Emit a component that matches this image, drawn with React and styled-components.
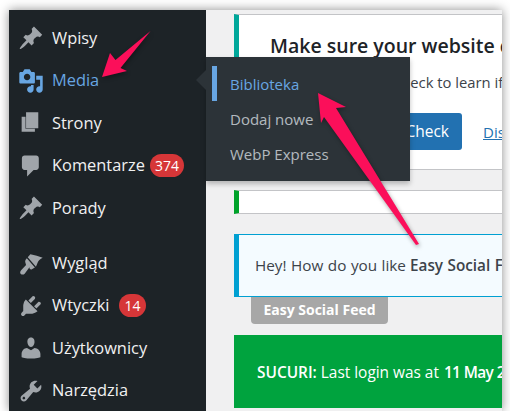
import styled, { createGlobalStyle } from "styled-components"

const GlobalStyle = createGlobalStyle`
    html, body {
        margin: 0;
        padding: 0;
        background: #fff;
        font-family: "Open Sans", "Liberation Sans", sans-serif;
    }
`

const Frame = styled.div`
    position: relative;
    display: flex;
    width: 493px;
    height: 401px;
    margin: 10px 0 0 9px;
    box-shadow: 0 0 10px rgba(0, 0, 0, 0.45);
`

const Sidebar = styled.nav`
    display: flex;
    flex-direction: column;
    flex: none;
    width: 197px;
    padding-top: 7px;
    box-sizing: border-box;
    background: #1d2327;
`

const MenuItem = styled.div`
    display: flex;
    align-items: center;
    flex: none;
    height: 42.5px;
    padding-left: 9px;
    margin-top: ${p => (p.$spaced ? "12.5px" : "0")};
    font-size: 16.4px;
    color: ${p => (p.$active ? "#68a6e2" : "#f0f0f1")};
`

const MenuLabel = styled.span`
    margin-bottom: 2px;
`

const MenuIcon = styled.svg`
    flex: none;
    width: 26px;
    height: 26px;
    margin-right: 8px;
    overflow: visible;
    fill: ${p => (p.$active ? "#68a6e2" : "#a0a5aa")};
`

const Count = styled.span`
    margin-left: ${p => p.$gap}px;
    padding: 0 5px;
    height: 23px;
    line-height: 23px;
    border-radius: 11.5px;
    background: #d63638;
    color: #fff;
    font-size: 14px;
`

const Main = styled.main`
    flex: 1;
    min-width: 0;
    padding: 4px 0 0 28px;
    overflow: hidden;
    background: #f0f0f1;
    white-space: nowrap;
    color: #3c434a;
`

const HealthCard = styled.section`
    height: 156px;
    padding: 17px 0 0 31px;
    box-sizing: border-box;
    background: #fff;
    border: 1px solid #c3c4c7;
    border-left: 5px solid #00a79a;
    border-right: 0;
`

const CardTitle = styled.h2`
    margin: 0;
    font-size: 19.5px;
    line-height: 27px;
    font-weight: 600;
    color: #1d2327;
`

const CardText = styled.p`
    margin: 12px 0 0;
    font-size: 14.8px;
    line-height: 22px;
`

const CardActions = styled.div`
    display: flex;
    align-items: center;
    margin-top: 20px;
`

const CheckButton = styled.a`
    display: block;
    flex: none;
    width: 192px;
    height: 37px;
    line-height: 37px;
    text-align: right;
    padding-right: 13px;
    box-sizing: border-box;
    border-radius: 3px;
    background: #2271b1;
    color: #fff;
    font-size: 15.5px;
`

const DismissLink = styled.a`
    flex: none;
    margin-left: 21px;
    font-size: 15px;
    color: #2271b1;
    text-decoration: underline;
`

const EmptyNotice = styled.div`
    height: 24px;
    margin-top: 20px;
    box-sizing: border-box;
    background: #fff;
    border: 1px solid #c3c4c7;
    border-left: 5px solid #00a32a;
    border-right: 0;
`

const FeedNotice = styled.div`
    display: flex;
    align-items: center;
    height: 63px;
    margin-top: 20px;
    padding: 0 0 1px 16px;
    box-sizing: border-box;
    background: #f4fbff;
    border: 1px solid #00a0d2;
    border-left: 5px solid #00a0d2;
    border-right: 0;
    font-size: 15.3px;
    word-spacing: 0.5px;
`

const Strong = styled.strong`
    font-weight: 600;
    margin-left: 4px;
`

const FeedTag = styled.div`
    width: 137px;
    height: 27px;
    margin-left: 17px;
    line-height: 26px;
    text-align: center;
    border-radius: 0 0 4px 4px;
    background: #a7a7a7;
    color: #fff;
    font-size: 14px;
    font-weight: 700;
`

const SucuriNotice = styled.div`
    display: flex;
    align-items: center;
    height: 73px;
    margin-top: 11px;
    padding: 2px 0 0 23px;
    box-sizing: border-box;
    background: #00a33e;
    color: #fff;
    font-size: 15.4px;
`

const SucuriLabel = styled.strong`
    font-weight: 600;
    margin-right: 4px;
`

const SucuriDate = styled.strong`
    font-weight: 600;
    margin-left: 5px;
    letter-spacing: -0.6px;
`

const Flyout = styled.div`
    position: absolute;
    left: 197px;
    top: 47px;
    width: 204px;
    height: 124px;
    padding-top: 9px;
    box-sizing: border-box;
    background: #2c3338;
    box-shadow: 0 3px 5px rgba(0, 0, 0, 0.25);
    &::before {
        content: "";
        position: absolute;
        left: -10px;
        top: 13px;
        border: 10px solid transparent;
        border-left: 0;
        border-right-color: #2c3338;
    }
`

const FlyoutItem = styled.div`
    position: relative;
    height: 35px;
    line-height: 37px;
    padding-left: 24px;
    font-size: 15px;
    color: ${p => (p.$active ? "#68a6e2" : "rgba(240, 246, 252, 0.7)")};
    &::before {
        content: "";
        display: ${p => (p.$active ? "block" : "none")};
        position: absolute;
        left: 6px;
        top: 0;
        width: 5px;
        height: 35px;
        background: #68a6e2;
    }
`

const ArrowLayer = styled.svg`
    position: absolute;
    left: -9px;
    top: -10px;
    width: 510px;
    height: 420px;
    pointer-events: none;
    filter: drop-shadow(1px 2px 2px rgba(0, 0, 0, 0.35));
`

const icons = {
    pin: "M10.44 3.02l1.82-1.82 6.36 6.35-1.83 1.82c-1.05-.68-2.48-.57-3.41.36l-.75.75c-.92.93-1.04 2.35-.35 3.41l-1.83 1.82-2.41-2.41-2.8 2.79c-.42.42-3.38 2.71-3.8 2.29s1.86-3.39 2.28-3.81l2.79-2.79L4.1 9.36l1.83-1.82c1.05.69 2.48.57 3.4-.36l.75-.75c.93-.92 1.05-2.35.36-3.41z",
    media: "M13 11V4c0-.55-.45-1-1-1h-1.67L9 1H5L3.67 3H2c-.55 0-1 .45-1 1v7c0 .55.45 1 1 1h10c.55 0 1-.45 1-1zM7 4.5c1.38 0 2.5 1.12 2.5 2.5S8.38 9.5 7 9.5 4.5 8.38 4.5 7 5.62 4.5 7 4.5zM14 6h5v10.5c0 1.38-1.12 2.5-2.5 2.5S14 17.88 14 16.5s1.12-2.5 2.5-2.5c.17 0 .34.02.5.05V9h-3V6zm-4 8.05V13h2v3.5c0 1.38-1.12 2.5-2.5 2.5S7 17.88 7 16.5 8.12 14 9.5 14c.17 0 .34.02.5.05z",
    page: "M6.2 1.8h9.4v12.3H6.2zM2.8 5.1h3v9.4H13v2.2H2.8z",
    comments: "M5 2h9c1.1 0 2 .9 2 2v7c0 1.1-.9 2-2 2h-2l-5 5v-5H5c-1.1 0-2-.9-2-2V4c0-1.1.9-2 2-2z",
    brush: "M9.5 3.3C13 4 16 5 19 5.9c-2 .9-3 2.1-3.6 3.1l-1.6 3.8-6.3-7.3zM6.8 6.3l6.2 7.2-2.3 1.3c-.6.3-1.3.1-1.7-.4l-.2-1.2L5.3 18c-.8 1-2.3 1.2-3.1.5s-.6-2.1.2-2.9l3.8-4.1-.6-2c-.3-1 .2-2.3 1.2-3.2z",
    plugin: "M13.11 4.36L9.87 7.6 8 5.73l3.24-3.24c.35-.34 1.05-.25 1.54.24.49.49.58 1.19.24 1.54zm-8 1.77l.91-1.12 9.01 9.01-1.19.84c-.71.71-2.63 1.16-3.82 1.16H6.14L4.9 17.26c-.59.59-1.54.59-2.12 0-.59-.58-.59-1.53 0-2.12l1.24-1.24v-3.88c0-1.13.46-3.05 1.09-3.89zm7.26 3.97l3.24-3.24c.34-.34 1.05-.25 1.54.24.49.49.58 1.2.24 1.54l-3.24 3.24z",
    users: "M10 9.25c-2.27 0-2.73-3.44-2.73-3.44C7 4.02 7.82 2 9.97 2c2.16 0 2.98 2.02 2.71 3.81 0 0-.41 3.44-2.68 3.44zm0 2.57L12.72 10c2.39 0 4.52 2.33 4.52 4.53v2.49s-3.65 1.13-7.24 1.13c-3.65 0-7.24-1.13-7.24-1.13v-2.49c0-2.25 1.94-4.48 4.15-4.48z",
    tools: "M16.68 9.77c-1.34 1.34-3.3 1.67-4.95.99l-5.41 6.52c-.99.99-2.59.99-3.58 0s-.99-2.59 0-3.57l6.52-5.42c-.68-1.65-.35-3.61.99-4.95 1.28-1.28 3.12-1.62 4.72-1.06l-2.89 2.89 2.82 2.82 2.86-2.87c.53 1.58.18 3.39-1.08 4.65zM3.81 16.21c.4.39 1.03.39 1.42 0 .4-.4.4-1.03 0-1.43-.39-.39-1.02-.39-1.42 0-.39.4-.39 1.03 0 1.43z",
}

const menu = [
    { label: "Wpisy", icon: "pin" },
    { label: "Media", icon: "media", active: true },
    { label: "Strony", icon: "page" },
    { label: "Komentarze", icon: "comments", count: 374, gap: 5 },
    { label: "Porady", icon: "pin" },
    { label: "Wygląd", icon: "brush", spaced: true },
    { label: "Wtyczki", icon: "plugin", count: 14, gap: 10 },
    { label: "Użytkownicy", icon: "users" },
    { label: "Narzędzia", icon: "tools" },
]

export default function App() {
    return (
        <>
            <GlobalStyle />
            <Frame>
                <Sidebar>
                    {menu.map(item => (
                        <MenuItem key={item.label} $active={item.active} $spaced={item.spaced}>
                            <MenuIcon viewBox="0 0 20 20" $active={item.active}>
                                <path d={icons[item.icon]} />
                            </MenuIcon>
                            <MenuLabel>{item.label}</MenuLabel>
                            {item.count && <Count $gap={item.gap}>{item.count}</Count>}
                        </MenuItem>
                    ))}
                </Sidebar>
                <Main>
                    <HealthCard>
                        <CardTitle>Make sure your website complies</CardTitle>
                        <CardText>Run a Site Health Check to learn if</CardText>
                        <CardActions>
                            <CheckButton>Check</CheckButton>
                            <DismissLink>Dismiss</DismissLink>
                        </CardActions>
                    </HealthCard>
                    <EmptyNotice />
                    <FeedNotice>
                        Hey! How do you like<Strong>Easy Social Feed</Strong>
                    </FeedNotice>
                    <FeedTag>Easy Social Feed</FeedTag>
                    <SucuriNotice>
                        <SucuriLabel>SUCURI:</SucuriLabel> Last login was at <SucuriDate>11 May 2021</SucuriDate>
                    </SucuriNotice>
                </Main>
                <Flyout>
                    <FlyoutItem $active>Biblioteka</FlyoutItem>
                    <FlyoutItem>Dodaj nowe</FlyoutItem>
                    <FlyoutItem>WebP Express</FlyoutItem>
                </Flyout>
                <ArrowLayer viewBox="0 0 510 420">
                    <path fill="#fb0f5a" d="M102 77L110 53L115.5 60L150.5 31L120.5 68L127 71Z" />
                    <path fill="#fb0f5a" d="M318 93L346 107L336 108L419 244L416 245L324 117L321 123Z" />
                </ArrowLayer>
            </Frame>
        </>
    )
}
